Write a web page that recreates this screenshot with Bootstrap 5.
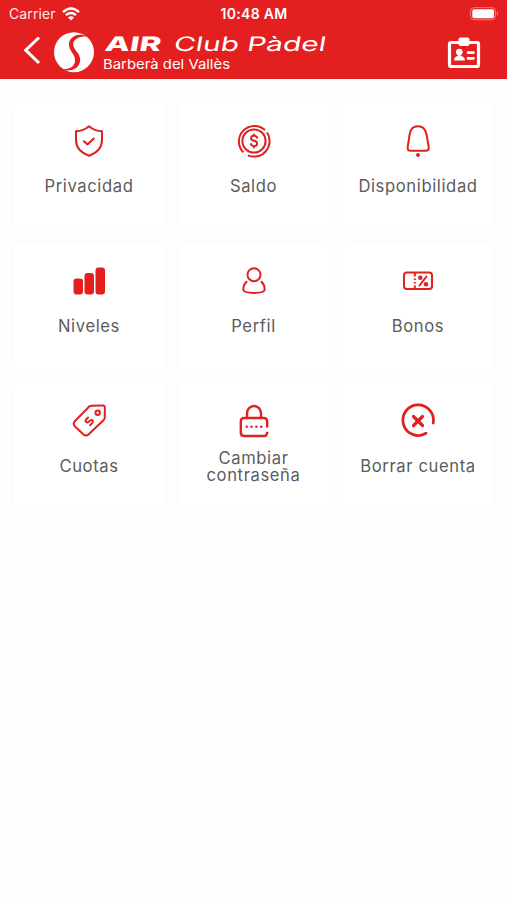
<!DOCTYPE html>
<html lang="es">
<head>
<meta charset="utf-8">
<meta name="viewport" content="width=device-width, initial-scale=1">
<title>AIR Club Pàdel</title>
<link href="https://cdn.jsdelivr.net/npm/bootstrap@5.3.0/dist/css/bootstrap.min.css" rel="stylesheet">
<style>
body{font-family:Inter,"Liberation Sans",sans-serif;background:#fefefe;color:#595959}
svg{display:block;flex:none}
.app-head{background:#e3201f;height:79px;color:#fff}
.status{height:27px;padding:0 8px 0 9px;font-size:14px}
.carrier{letter-spacing:.1px;opacity:.9}
.status>*{flex:1 1 0}
.clock{font-weight:600;letter-spacing:.3px}
.brand-bar{height:52px;padding:0 26px 0 23px}
.back{margin-bottom:6px}
.brand{margin-left:12px;margin-bottom:2px}
.tiles{padding:24px 13.5px 0;display:grid;grid-template-columns:repeat(3,1fr);gap:13px 13.5px}
.tile{height:127px;padding-top:17.5px;border:0;border-radius:5px;background:#fff;box-shadow:0 0 6px rgba(0,0,0,.022)}
.tile svg{fill:none;stroke:#df2120;stroke-width:2;stroke-linecap:round;stroke-linejoin:round}
.tile-label{margin-top:8px;height:37px;font-size:16.6px;line-height:17.5px;color:#5c5c5c;letter-spacing:.62px}
</style>
</head>
<body>
<header class="app-head">
  <div class="status d-flex align-items-center">
    <div class="d-flex align-items-center"><span class="carrier">Carrier</span>
      <svg style="margin-left:6px" width="18" height="14" viewBox="0 0 18 14" fill="none" stroke="#fff" stroke-width="2.4"><path d="M1 5.200Q9-2 17 5.200M4 8.200Q9 3.900 14 8.200"/><path d="M6 10.400Q9 7.900 12 10.400L9 13.600Z" fill="#fff" stroke="none"/></svg>
    </div>
    <div class="clock text-center">10:48 AM</div>
    <div class="d-flex justify-content-end"><svg width="29" height="14" viewBox="0 0 29 14"><rect x=".6" y=".6" width="25" height="12.200" rx="3.500" fill="none" stroke="#ee7c7b"/><rect x="2.300" y="2.300" width="21.800" height="8.900" rx="1.800" fill="#fff"/><path d="M27 4.600q2 2 0 4z" fill="#f4a5a4"/></svg></div>
  </div>
  <div class="brand-bar d-flex align-items-center">
    <svg class="back" width="19" height="30" viewBox="0 0 19 30" fill="none" stroke="#fff" stroke-width="3"><path d="M16 2.500 2.700 15.200 16 28"/></svg>
    <svg class="brand" width="280" height="46" viewBox="54 29 280 46" fill="#fff" font-family="Inter, sans-serif">
      <circle cx="74" cy="52.200" r="20"/>
      <path d="M88 36.500C79 32.500 69.500 36 69 44C68.600 51 75 53.500 75 60C75 66 71 69.500 61 69.500C72 72.500 79.600 68 80.200 60.500C80.600 53 73 50 73.200 44C73.500 38.500 80 36 88 36.500Z" fill="#e3201f"/>
      <text transform="translate(104 51) skewX(-10)" font-size="19.800" font-weight="800" textLength="56" lengthAdjust="spacingAndGlyphs">AIR</text>
      <text transform="translate(173 51) skewX(-10)" font-size="19.800" font-weight="400" textLength="152" lengthAdjust="spacingAndGlyphs">Club Pàdel</text>
      <text x="103" y="68.700" font-size="13.600" textLength="127" lengthAdjust="spacingAndGlyphs">Barberà del Vallès</text>
    </svg>
    <svg class="ms-auto" width="34" height="32" viewBox="0 0 34 32"><rect x="2.500" y="5.500" width="29" height="24" rx="1.500" fill="none" stroke="#fff" stroke-width="3.200"/><rect x="11.500" y=".5" width="11" height="8.500" rx="2" fill="#fff"/><circle cx="12.300" cy="15" r="3.300" fill="#fff"/><path d="M10.800 16h3v3q4.200.5 4.200 4.500H7q0-4 3.800-4.500Z" fill="#fff"/><path d="M21 15.600h5.500M21 21.300h5.500" stroke="#fff" stroke-width="2.700" stroke-linecap="round"/></svg>
  </div>
</header>
<main class="tiles">
  <div class="tile card align-items-center">
    <svg width="40" height="40" viewBox="0 0 40 40"><path d="M20 5.200Q25.500 10 33 10.200V19Q33 30 20 34.700Q7 30 7 19V10.200Q14.500 10 20 5.200Z"/><path d="M15 20.200l3.500 3.300 6.300-6"/></svg>
    <div class="tile-label d-flex align-items-center text-center">Privacidad</div>
  </div>
  <div class="tile card align-items-center">
    <svg width="40" height="40" viewBox="0 0 40 40"><circle cx="20" cy="20" r="11.600"/><path d="M9.360 31.400A15.600 15.600 0 0 1 31.030 8.970M33.080 11.500A15.600 15.600 0 0 1 13.900 34.360" stroke-linecap="butt"/><path d="M23 16.800q-.5-2-3-2-2.900 0-2.900 2.400 0 2 2.900 2.600 3.100.6 3.100 2.800 0 2.500-3.100 2.500-2.600 0-3.100-2M20 13.500v1.300M20 25v1.500"/></svg>
    <div class="tile-label d-flex align-items-center text-center">Saldo</div>
  </div>
  <div class="tile card align-items-center">
    <svg width="40" height="40" viewBox="0 0 40 40"><path d="M20 5.200C14.500 5.200 12.200 9 11.600 13.500L9.700 26Q9.200 29.700 12.500 29.700H27.500Q31.300 29.700 30.700 26L28.600 13.500C27.700 9 25.500 5.200 20 5.200Z"/><circle cx="20" cy="34" r="2" fill="#df2120" stroke="none"/></svg>
    <div class="tile-label d-flex align-items-center text-center">Disponibilidad</div>
  </div>
  <div class="tile card align-items-center">
    <svg width="40" height="40" viewBox="0 0 40 40"><g fill="#e3201f" stroke="none"><rect x="4.500" y="17.500" width="9.500" height="16" rx="3"/><rect x="15.500" y="12" width="9.500" height="21.500" rx="3"/><rect x="26.500" y="6.500" width="9.500" height="27" rx="3"/></g></svg>
    <div class="tile-label d-flex align-items-center text-center">Niveles</div>
  </div>
  <div class="tile card align-items-center">
    <svg width="40" height="40" viewBox="0 0 40 40"><circle cx="20" cy="13.700" r="6.500"/><path d="M12.500 20.800Q9.300 24 9.300 28.500Q9.500 31.900 20 32Q30.500 31.900 30.700 28.500Q30.700 24 27.500 20.800"/></svg>
    <div class="tile-label d-flex align-items-center text-center">Perfil</div>
  </div>
  <div class="tile card align-items-center">
    <svg width="40" height="40" viewBox="0 0 40 40"><rect x="6" y="11.500" width="28" height="16.500" rx="2.800"/><path d="M16.800 12v3.500M16.800 17.500v1.500M16.800 21v1.500M16.800 24.500v3.500" stroke-linecap="butt"/><path d="M28.500 15.500l-7 9"/><g fill="#df2120"><circle cx="22.300" cy="16.800" r="1.300"/><circle cx="28" cy="23.300" r="1.300"/></g></svg>
    <div class="tile-label d-flex align-items-center text-center">Bonos</div>
  </div>
  <div class="tile card align-items-center">
    <svg width="40" height="40" viewBox="0 0 40 40"><path d="M20.500 5.300Q21.300 4.700 22.500 4.700L34 4.500Q35.800 4.500 35.800 6.500V16.500Q35.800 18 34.500 19.200L19.500 33.500Q17 35.500 14.500 33.500L6 25.500Q3.500 22.800 6 20Z"/><circle cx="28.700" cy="11.700" r="2.200"/><path transform="rotate(-45 20 20)" d="M21.800 16.900H20Q17.200 16.900 17.200 18.800 17.200 20.300 20 20.300 22.800 20.300 22.800 22 22.800 23.700 20 23.700H17.800"/></svg>
    <div class="tile-label d-flex align-items-center text-center">Cuotas</div>
  </div>
  <div class="tile card align-items-center">
    <svg width="40" height="40" viewBox="0 0 40 40" style="stroke-width:2.400"><path d="M13 16.500V12.300a7 7.300 0 0 1 14 0V16.500M33.200 26.500V20.500Q33.200 17 29.700 17H10.300Q6.800 17 6.800 20.500V31.500Q6.800 35 10.300 35H29.700Q33.200 35 33.200 30.700" stroke-linecap="butt"/><path d="M12.700 25.800h.1M17.500 25.800h.1M22.300 25.800h.1M27.200 25.800h.1"/></svg>
    <div class="tile-label d-flex align-items-center text-center">Cambiar<br>contraseña</div>
  </div>
  <div class="tile card align-items-center">
    <svg width="40" height="40" viewBox="0 0 40 40" style="stroke-width:2.800"><path d="M35.200 22A15.300 15.300 0 1 0 28 32.300"/><path d="M15.500 15.500l9 9M24.500 15.500l-9 9" stroke-width="3.200"/></svg>
    <div class="tile-label d-flex align-items-center text-center">Borrar cuenta</div>
  </div>
</main>
<script src="https://cdn.jsdelivr.net/npm/bootstrap@5.3.0/dist/js/bootstrap.bundle.min.js"></script>
</body>
</html>
